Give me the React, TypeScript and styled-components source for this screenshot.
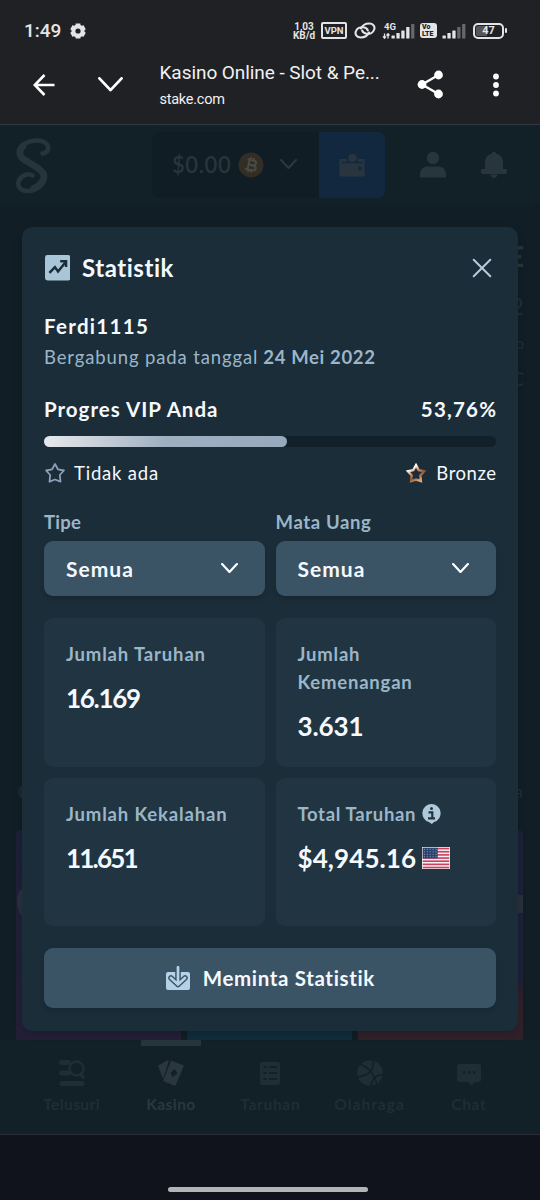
import React from "react";
import styled, { createGlobalStyle } from "styled-components";

const GlobalStyle = createGlobalStyle`
  *, *::before, *::after { box-sizing: border-box; }
  body { margin: 0; background: #10141b; }
  svg { display: block; flex: none; }
`;

const Screen = styled.div`
  width: 540px;
  height: 1200px;
  display: flex;
  flex-direction: column;
  overflow: hidden;
  background: #10131b;
  color: #fff;
  font-family: Lato, "Open Sans", sans-serif;
`;

/* ---------- text ---------- */

const Label = styled.span<{ $size?: number; $weight?: number; $track?: number; $color?: string; $line?: number }>`
  font-size: ${(p) => p.$size ?? 18.5}px;
  font-weight: ${(p) => p.$weight ?? 400};
  letter-spacing: ${(p) => p.$track ?? 0}px;
  margin-right: ${(p) => -(p.$track ?? 0)}px;
  color: ${(p) => p.$color ?? "#f5f9fd"};
  line-height: ${(p) => p.$line ?? 28}px;
  white-space: nowrap;
`;

/* ---------- phone chrome ---------- */

const StatusBar = styled.div`
  height: 61px;
  flex: none;
  display: flex;
  align-items: center;
  padding: 0 33px 0 24px;
  background: #202125;
  color: #e4e4e6;
  font-family: Roboto, sans-serif;
`;

const Clock = styled.span`
  font-size: 19px;
  font-weight: 500;
  width: 46px;
  line-height: 24px;
  padding-top: 1px;
`;

const StatusIcons = styled.div`
  margin-left: auto;
  display: flex;
  align-items: center;
`;

const Speed = styled.div`
  font-size: 10px;
  line-height: 9.5px;
  font-weight: 700;
  text-align: center;
  width: 22px;
  margin-right: 6px;
  padding-top: 1px;
  white-space: nowrap;
`;

const VpnTag = styled.div`
  width: 26px;
  height: 17px;
  border: 2px solid #e4e4e6;
  border-radius: 2px;
  font-size: 9.5px;
  font-weight: 700;
  line-height: 13px;
  text-align: center;
  margin-right: 7px;
`;

const VolteTag = styled.div`
  width: 17px;
  height: 15px;
  border-radius: 3px;
  background: #e4e4e6;
  color: #202125;
  font-size: 7px;
  font-weight: 900;
  line-height: 6.5px;
  padding: 1px 0 0 2px;
  margin: 0 5px;
`;

const Battery = styled.div`
  width: 31px;
  height: 16px;
  margin-left: 7px;
  border: 2px solid #e4e4e6;
  border-radius: 5px;
  padding: 1px;
  background: linear-gradient(90deg, #55565a 45%, transparent 45%) content-box;
  font-size: 11px;
  font-weight: 700;
  line-height: 10px;
  text-align: center;
`;

const BatteryTip = styled.div`
  width: 2px;
  height: 5px;
  margin-left: 1px;
  border-radius: 1px;
  background: #e4e4e6;
`;

const BrowserBar = styled.div`
  height: 64px;
  flex: none;
  display: grid;
  grid-template-columns: 66px 66px 1fr 66px 66px;
  padding: 0 11px 16px;
  align-items: center;
  justify-items: center;
  background: #202125;
  border-bottom: 1px solid #323841;
`;

const PageTitle = styled.div`
  justify-self: start;
  padding-left: 16.5px;
  padding-top: 1px;
  width: 100%;
  height: 47px;
  min-width: 0;
  display: flex;
  flex-direction: column;
  gap: 7px;
  font-family: Roboto, sans-serif;
  color: #f1f1f2;
`;

const TitleLine = styled.div`
  font-size: 19px;
  line-height: 22px;
  letter-spacing: -0.06px;
  white-space: nowrap;
`;

const HostLine = styled.div`
  font-size: 14.5px;
  line-height: 18px;
  letter-spacing: -0.25px;
`;

const SystemNav = styled.div`
  flex: 1;
  border-top: 1px solid #2a2d33;
  background: #10131b;
  display: flex;
  align-items: flex-end;
  justify-content: center;
  padding: 0 4px 8px 0;
`;

const HomeHandle = styled.div`
  width: 200px;
  height: 5.5px;
  border-radius: 3px;
  background: #b2b4b6;
`;

/* ---------- dimmed page ---------- */

const Page = styled.div`
  position: relative;
  height: 1009px;
  flex: none;
  display: flex;
  flex-direction: column;
  background: #111e25;
`;

const SiteHeader = styled.div`
  height: 79px;
  flex: none;
  display: flex;
  align-items: center;
  background: #122027;
  color: #28353d;
  padding: 0 32px 0 14px;
`;

const WalletGroup = styled.div`
  display: flex;
  margin-left: 100px;
  margin-right: 35px;
  height: 66px;
  border-radius: 7px;
  overflow: hidden;
`;

const Balance = styled.div`
  width: 167px;
  background: #101d24;
  display: flex;
  align-items: center;
  gap: 7px;
  padding-left: 20px;
`;

const BalanceChevron = styled.div`
  margin-left: 9px;
`;

const WalletButton = styled.div`
  width: 66px;
  background: #12283e;
  display: flex;
  align-items: center;
  justify-content: center;
`;

const HeaderIcons = styled.div`
  display: flex;
  gap: 35px;
`;

const Content = styled.div`
  flex: 1;
  display: flex;
  flex-direction: column;
  padding: 0 17px 0 16px;
`;

const Summary = styled.div`
  height: 578px;
  display: flex;
  flex-direction: column;
  align-items: flex-end;
  padding-top: 36px;
`;

const SummaryLine = styled.div<{ $size: number; $height: number; $bold?: boolean }>`
  font-size: ${(p) => p.$size}px;
  height: ${(p) => p.$height}px;
  line-height: 32px;
  margin-right: -1px;
  font-weight: ${(p) => (p.$bold ? 900 : 400)};
  color: ${(p) => (p.$bold ? "#28343c" : "#222e36")};
`;

const SectionHead = styled.div`
  height: 48px;
  display: flex;
  justify-content: space-between;
`;

const Dot = styled.div`
  width: 18px;
  height: 18px;
  margin: 1px 0 0 2px;
  border-radius: 50%;
  background: #1c2930;
`;

const SectionTail = styled(Label)`
  margin-top: -5px;
`;

const Tiles = styled.div`
  display: grid;
  grid-template-columns: repeat(3, 1fr);
  gap: 6px;
  height: 210px;
`;

const Tile = styled.div<{ $bg: string }>`
  background: ${(p) => p.$bg};
  border-radius: 5px 5px 0 0;
  display: flex;
  align-items: flex-start;
  overflow: hidden;
`;

const TileArt = styled.div<{ $right?: boolean }>`
  width: 14px;
  height: ${(p) => (p.$right ? 18 : 28)}px;
  margin: ${(p) => (p.$right ? "65px 0 0 auto" : "58px 0 0 1px")};
  border-radius: ${(p) => (p.$right ? 0 : "50%")};
  background: #28313a;
`;

const BottomNav = styled.div`
  height: 94px;
  flex: none;
  display: grid;
  grid-template-columns: repeat(5, 99.3px);
  padding-left: 22px;
  background: #122027;
`;

const NavItem = styled.div<{ $active?: boolean }>`
  display: flex;
  flex-direction: column;
  align-items: center;
  color: ${(p) => (p.$active ? "#2b373f" : "#1f2d35")};
`;

const NavMarker = styled.div<{ $active?: boolean }>`
  width: 60px;
  height: 6px;
  margin-bottom: 14px;
  background: ${(p) => (p.$active ? "#27343b" : "transparent")};
`;

const NavLabel = styled.div<{ $track: number }>`
  margin-top: 6px;
  font-size: 15.5px;
  line-height: 24px;
  font-weight: 700;
  letter-spacing: ${(p) => p.$track}px;
`;

/* ---------- dialog ---------- */

const Dialog = styled.div`
  position: absolute;
  left: 22px;
  top: 102px;
  width: 496px;
  height: 804px;
  border-radius: 10px;
  background: #1b2d38;
  padding: 22px;
  display: flex;
  flex-direction: column;
  box-shadow: 0 3px 8px rgba(0, 0, 0, 0.16);
`;

const Row = styled.div<{ $height: number; $gap?: number; $spread?: boolean; $top?: number }>`
  height: ${(p) => p.$height}px;
  margin-top: ${(p) => p.$top ?? 0}px;
  flex: none;
  display: flex;
  align-items: center;
  gap: ${(p) => p.$gap ?? 0}px;
  justify-content: ${(p) => (p.$spread ? "space-between" : "flex-start")};
`;

const DialogHeader = styled.div`
  height: 40px;
  flex: none;
  display: flex;
  align-items: center;
  justify-content: space-between;
  padding: 0 4px 2px 0.5px;
`;

const Track = styled.div`
  height: 11px;
  flex: none;
  margin-top: 12px;
  border-radius: 6px;
  background: #12202a;
`;

const Fill = styled.div`
  height: 100%;
  border-radius: 6px;
  background: linear-gradient(90deg, #e6e8ec 0%, #d3d8df 15%, #9eafc0 50%, #96aabd 100%);
`;

const Columns = styled.div`
  display: grid;
  grid-template-columns: 220.5px 220.5px;
  gap: 11px;
`;

const Filters = styled(Columns)`
  margin-top: 9px;
`;

const Field = styled.div`
  display: flex;
  flex-direction: column;
  gap: 5px;
`;

const Select = styled.div`
  height: 55px;
  border-radius: 9px;
  background: #3a5466;
  box-shadow: 0 3px 5px rgba(0, 0, 0, 0.14);
  display: flex;
  align-items: center;
  justify-content: space-between;
  padding: 0 27px 0 22px;
`;

const Cards = styled(Columns)`
  margin-top: 22px;
`;

const Card = styled.div`
  height: 148.5px;
  border-radius: 9px;
  background: #203541;
  padding: 22px;
  display: flex;
  flex-direction: column;
`;

const Figure = styled.div`
  display: flex;
  align-items: center;
  gap: 6px;
  margin-top: 16px;
`;

const RequestButton = styled.div`
  margin-top: 22px;
  height: 60px;
  flex: none;
  border-radius: 9px;
  background: #3a5466;
  box-shadow: 0 3px 5px rgba(0, 0, 0, 0.12);
  display: flex;
  align-items: center;
  justify-content: center;
  gap: 13px;
`;

/* ---------- drawings ---------- */

const Chevron = ({ w, h, stroke, color = "#fff" }: { w: number; h: number; stroke: number; color?: string }) => (
  <svg width={w} height={h} viewBox={`0 0 ${w} ${h}`} fill="none" stroke={color} strokeWidth={stroke} strokeLinecap="round" strokeLinejoin="round">
    <path d={`M${stroke / 2} ${stroke / 2}L${w / 2} ${h - stroke / 2 - 0.5}L${w - stroke / 2} ${stroke / 2}`} />
  </svg>
);

const Gear = () => (
  <svg width="16" height="16" viewBox="0 0 16 16">
    <circle cx="8" cy="8" r="4.6" fill="none" stroke="#e4e4e6" strokeWidth="4" />
    <g stroke="#e4e4e6" strokeWidth="4.8">
      {[0, 60, 120].map((a) => (
        <path key={a} transform={`rotate(${a} 8 8)`} d="M8 .4v2.2M8 13.4v2.2" />
      ))}
    </g>
  </svg>
);

const LinkRings = () => (
  <svg width="22" height="17" viewBox="0 0 22 17" fill="none" stroke="#e4e4e6" strokeWidth="2.100" strokeLinecap="round">
    <path d="M15 10.500C13.500 13.800 10 15.500 6.800 15.500 2.800 15.500.8 12.500 1.800 9.500 2.800 6.300 6.200 4.800 9.500 5.300c2 .3 3.700 1.500 4.300 3" />
    <path d="M7 6.500C8.500 3.200 12 1.500 15.200 1.500c4 0 6 3 5 6-1 3.200-4.400 4.700-7.700 4.200-2-.3-3.700-1.500-4.300-3" />
  </svg>
);

const Signal = ({ lit, first }: { lit: number; first?: boolean }) => (
  <svg width={first ? 39 : 24} height="18" viewBox={first ? "-6 0 39 18" : "9 0 24 18"}>
    {first && (
      <>
        <text x="2" y="7.700" fontSize="9.500" fontWeight="700" fill="#e4e4e6">4G</text>
        <path d="M2.500 11.500v4.500M1 14.300l1.500 1.900 1.500-1.900M6 16.500V12M4.500 13.500L6 11.700l1.500 1.800" stroke="#e4e4e6" strokeWidth="1.300" fill="none" />
      </>
    )}
    {[3, 5.5, 8, 11.5, 14.5].map((h, i) => (
      <rect key={i} x={9.5 + i * 4.9} y={16.5 - h} width="3.300" height={h} rx=".5" fill={i < lit ? "#e4e4e6" : "#66676b"} />
    ))}
  </svg>
);

const BackArrow = () => (
  <svg width="22" height="22" viewBox="0 0 22 22" fill="none" stroke="#fff" strokeWidth="2.600">
    <path d="M21.500 11H2M11.500 1L1.800 11l9.700 10" />
  </svg>
);

const Share = () => (
  <svg width="27" height="29" viewBox="0 0 27 29" fill="#fff">
    <path d="M21.500 5L5 14.500 21.500 24" fill="none" stroke="#fff" strokeWidth="2.400" />
    <circle cx="21.500" cy="5" r="4.400" />
    <circle cx="5" cy="14.500" r="4.400" />
    <circle cx="21.500" cy="24" r="4.400" />
  </svg>
);

const Dots = () => (
  <svg width="6" height="24" viewBox="0 0 6 24" fill="#fff">
    <circle cx="3" cy="3.500" r="2.900" />
    <circle cx="3" cy="12" r="2.900" />
    <circle cx="3" cy="20.500" r="2.900" />
  </svg>
);

const Logo = () => (
  <svg width="38" height="58" viewBox="0 0 38 58" fill="none" stroke="#26343c" strokeLinecap="round">
    <path
      d="M28.500 17.500C34 17 35.500 12 33 8.500 29 3 17 3.500 10.500 8 4 12.500 4 19.500 9.500 23.500 16 28 27 31 30.500 37.500 33 44.500 24 55 13.500 55 5 55 2.500 48.500 5.500 43.500 8.500 38.500 15 37 18.500 39.500"
      strokeWidth="4.600"
    />
    <path d="M9 10C4.500 14 5 20 10 23.700 16.500 28 26.500 31.500 29.700 38.500 31 44 26 50 20 52.500" strokeWidth="6.800" />
  </svg>
);

const Bitcoin = () => (
  <svg width="26" height="26" viewBox="0 0 26 26">
    <circle cx="13" cy="13" r="12.500" fill="#322e25" />
    <g transform="rotate(12 13 13)" fill="none" stroke="#4a4a45" strokeWidth="2">
      <path d="M8.500 8h6c4 0 4 5 0 5h-4.500M10 13h5c4.500 0 4.500 5 0 5H8M10.500 8v10M11.500 5.500V8M14.500 5.500V8M11.500 18v2.500M14.500 18v2.500" />
    </g>
  </svg>
);

const Wallet = () => (
  <svg width="27" height="24" viewBox="0 0 27 24">
    <path d="M1 6h7v3h11V6h6.500v17.500H2.500Q.5 23.500.5 21.500V6.500z" fill="#28353f" />
    <circle cx="13.500" cy="5" r="4.300" fill="#28353f" />
    <path d="M3 9.500h21" stroke="#12283e" strokeWidth="1.500" />
    <circle cx="21" cy="15.500" r="2" fill="#12283e" />
  </svg>
);

const User = () => (
  <svg width="26" height="27" viewBox="0 0 26 27" fill="#28353d">
    <circle cx="13" cy="7" r="6.200" />
    <path d="M0 26.500v-3C0 18 4 15.500 8 15.500h10c4 0 8 2.500 8 8v3z" />
  </svg>
);

const Bell = () => (
  <svg width="26" height="27" viewBox="0 0 26 27" fill="#28353d">
    <path d="M11 2.500a2 2 0 0 1 4 0c4.500 1 7 4.500 7 8.500v7h2a2 2 0 0 1 0 5H2a2 2 0 0 1 0-5h2v-7c0-4 2.500-7.500 7-8.500z" />
    <path d="M9.500 23.500h7c-.5 4.500-6.500 4.500-7 0z" />
  </svg>
);

const StatsIcon = () => (
  <svg width="25.500" height="25.500" viewBox="0 0 26 26">
    <rect width="26" height="26" rx="2.500" fill="#a9c5d8" />
    <path d="M4.500 18.300l5.600-6 3.200 4.500 7.400-9.200" fill="none" stroke="#1b2d38" strokeWidth="2.500" />
    <path d="M15.500 6.300h6v6" fill="none" stroke="#1b2d38" strokeWidth="2.500" />
  </svg>
);

const Close = () => (
  <svg width="20" height="20" viewBox="0 0 20 20" stroke="#b4cbdc" strokeWidth="2" strokeLinecap="round">
    <path d="M1.700 1.700l16.600 16.600M18.300 1.700L1.700 18.300" />
  </svg>
);

const Star = ({ bronze }: { bronze?: boolean }) => (
  <svg width="22" height="22" viewBox="0 0 22 22" fill="none">
    <defs>
      <linearGradient id="bronze" x1="0" y1="0" x2=".65" y2="1">
        <stop offset=".25" stopColor="#fffaf4" />
        <stop offset=".48" stopColor="#d4935f" />
        <stop offset=".72" stopColor="#8d5938" />
        <stop offset="1" stopColor="#e0a477" />
      </linearGradient>
    </defs>
    <path
      d={
        bronze
          ? "M11 3.200l2.700 4.900 5.300 1.200-3.700 4.100.6 5.600-4.900-1.500-4.900 1.500.6-5.600L3 9.300l5.300-1.200z"
          : "M11 2l2.900 5.300 6 1.200-4.100 4.500.7 6.700-5.500-2.200-5.500 2.200.7-6.700L2.100 8.500l6-1.200z"
      }
      stroke={bronze ? "url(#bronze)" : "#8b9fb6"}
      strokeWidth={bronze ? 2.4 : 1.8}
      strokeLinejoin={bronze ? "miter" : "round"}
    />
  </svg>
);

const Info = () => (
  <svg width="19" height="20" viewBox="0 0 19 20">
    <path d="M9.500 0a9.200 9.200 0 0 1 2.600 18L9.800 20l-2.900-2A9.200 9.200 0 0 1 9.500 0z" fill="#b0c9da" />
    <path d="M6.500 8.300h3.800v6M6 14.300h7" fill="none" stroke="#203541" strokeWidth="2.200" />
    <circle cx="9.500" cy="4.600" r="1.500" fill="#203541" />
  </svg>
);

const Flag = () => (
  <svg width="28" height="22" viewBox="0 0 28 22">
    <rect width="28" height="22" fill="#f3eef1" />
    {[0, 1, 2, 3, 4, 5, 6].map((i) => (
      <rect key={i} x=".7" y={0.8 + i * 3.15} width="26.600" height="1.600" fill="#c9405c" />
    ))}
    <rect x=".7" y=".8" width="15" height="10.600" fill="#29436f" />
    {[0, 1, 2, 3].map((r) =>
      [0, 1, 2, 3, 4].map((c) => <circle key={`${r}${c}`} cx={2.4 + c * 2.9} cy={2.3 + r * 2.5} r=".55" fill="#9fb4d0" />)
    )}
  </svg>
);

const Download = () => (
  <svg width="24" height="24" viewBox="0 0 24 24">
    <rect x="0" y="6" width="24" height="18" rx="2" fill="#b5d1e7" />
    <path d="M12 5v12M5 12l7 6.500 7-6.500" fill="none" stroke="#3a5466" strokeWidth="5.600" strokeLinecap="round" strokeLinejoin="round" />
    <path d="M12 1.200v16.500M5 12l7 6.500 7-6.500" fill="none" stroke="#b5d1e7" strokeWidth="2.700" strokeLinecap="round" strokeLinejoin="round" />
  </svg>
);

const navIcons: Record<string, React.ReactNode> = {
  Telusuri: (
    <>
      <path d="M2.500 2.500h7M2.500 13h7" stroke="currentColor" strokeWidth="5" strokeLinecap="round" />
      <path d="M3 23.500h20" stroke="currentColor" strokeWidth="5" strokeLinecap="round" />
      <circle cx="17.500" cy="8.500" r="7" fill="#122027" stroke="currentColor" strokeWidth="2.600" />
      <path d="M21 13l4 5.500" stroke="currentColor" strokeWidth="3" />
    </>
  ),
  Kasino: (
    <>
      <path d="M1 6L10 1 5 17z" fill="currentColor" strokeLinejoin="round" stroke="currentColor" strokeWidth="1.500" />
      <path d="M13.500 1.500L25 6l-8 19L6 20.500z" fill="currentColor" strokeLinejoin="round" stroke="currentColor" strokeWidth="1.500" />
      <path d="M17 9l2.500 4.500-5 3.500-2-4.500z" fill="#122027" />
    </>
  ),
  Taruhan: (
    <>
      <rect x="3" y="2" width="20" height="23" rx="2" fill="currentColor" />
      <path d="M6.500 7h3M6.500 13h3M6.500 19h3M12 7h8M12 13h8M12 19h8" stroke="#122027" strokeWidth="2" />
    </>
  ),
  Olahraga: (
    <>
      <circle cx="13" cy="13" r="12.800" fill="currentColor" />
      <path d="M3 4c6 2 15 8 17 22M16 0c2 8-3 16-16 17M26 15c-6-1-11 3-12 11" fill="none" stroke="#122027" strokeWidth="1.700" />
    </>
  ),
  Chat: (
    <>
      <path d="M3 4h20q2 0 2 2v14q0 2-2 2h-4l-3.500 3.500L12 22H3q-2 0-2-2V6q0-2 2-2z" fill="currentColor" />
      <path d="M7 12.500h2.500M12 12.500h2.500M17 12.500h2.500" stroke="#122027" strokeWidth="2.500" />
    </>
  ),
};

const navItems = [
  { label: "Telusuri", track: 0.4 },
  { label: "Kasino", track: 0.4, active: true },
  { label: "Taruhan", track: 0.7 },
  { label: "Olahraga", track: 1 },
  { label: "Chat", track: 0.7 },
];

const MUTED = "#9bb6c8";

export default function App() {
  return (
    <>
      <GlobalStyle />
      <Screen>
        <StatusBar>
          <Clock>1:49</Clock>
          <Gear />
          <StatusIcons>
            <Speed>1,03<br />KB/d</Speed>
            <VpnTag>VPN</VpnTag>
            <LinkRings />
            <Signal lit={4} first />
            <VolteTag>Vo<br />LTE</VolteTag>
            <Signal lit={3} />
            <Battery>47</Battery>
            <BatteryTip />
          </StatusIcons>
        </StatusBar>
        <BrowserBar>
          <BackArrow />
          <Chevron w={25} h={15} stroke={2.8} />
          <PageTitle>
            <TitleLine>Kasino Online - Slot &amp; Pe...</TitleLine>
            <HostLine>stake.com</HostLine>
          </PageTitle>
          <Share />
          <Dots />
        </BrowserBar>

        <Page>
          <SiteHeader>
            <Logo />
            <WalletGroup>
              <Balance>
                <Label $size={22} $weight={600} $color="#28353d" $track={0.6}>$0.00</Label>
                <Bitcoin />
                <BalanceChevron>
                  <Chevron w={17} h={10.5} stroke={2} color="#2b3840" />
                </BalanceChevron>
              </Balance>
              <WalletButton><Wallet /></WalletButton>
            </WalletGroup>
            <HeaderIcons>
              <User />
              <Bell />
            </HeaderIcons>
          </SiteHeader>
          <Content>
            <Summary>
              <SummaryLine $size={28} $height={50} $bold>E</SummaryLine>
              <SummaryLine $size={24} $height={37}>2</SummaryLine>
              <SummaryLine $size={16} $height={35}>o</SummaryLine>
              <SummaryLine $size={20} $height={36}>C</SummaryLine>
            </Summary>
            <SectionHead>
              <Dot />
              <SectionTail $size={18} $color="#222e36">a</SectionTail>
            </SectionHead>
            <Tiles>
              <Tile $bg="linear-gradient(#1c2039, #241f37)"><TileArt /></Tile>
              <Tile $bg="#102c3a" />
              <Tile $bg="linear-gradient(#1c2039 70%, #30202a 80%)"><TileArt $right /></Tile>
            </Tiles>
          </Content>
          <BottomNav>
            {navItems.map((n) => (
              <NavItem key={n.label} $active={n.active}>
                <NavMarker $active={n.active} />
                <svg width="26" height="26" viewBox="0 0 26 26" fill="none">{navIcons[n.label]}</svg>
                <NavLabel $track={n.track}>{n.label}</NavLabel>
              </NavItem>
            ))}
          </BottomNav>

          <Dialog>
            <DialogHeader>
              <Row $height={38} $gap={12}>
                <StatsIcon />
                <Label $size={24} $weight={700} $track={0.55}>Statistik</Label>
              </Row>
              <Close />
            </DialogHeader>
            <Row $height={35} $top={19}><Label $size={20.5} $weight={700} $track={1.3}>Ferdi1115</Label></Row>
            <Row $height={28} $gap={6}>
              <Label $size={18.5} $track={0.87} $color={MUTED}>Bergabung pada tanggal</Label>
              <Label $size={18.5} $weight={700} $track={0.65} $color={MUTED}>24 Mei 2022</Label>
            </Row>
            <Row $height={31} $top={22} $spread>
              <Label $size={20.5} $weight={700} $track={1}>Progres VIP Anda</Label>
              <Label $size={20.5} $weight={700} $track={1.2}>53,76%</Label>
            </Row>
            <Track><Fill style={{ width: "53.76%" }} /></Track>
            <Row $height={52} $spread>
              <Row $height={28} $gap={8}>
                <Star />
                <Label $track={0.8}>Tidak ada</Label>
              </Row>
              <Row $height={28} $gap={9}>
                <Star bronze />
                <Label $track={0.55}>Bronze</Label>
              </Row>
            </Row>
            <Filters>
              <Field>
                <Label $weight={700} $track={0.3}  $color={MUTED}>Tipe</Label>
                <Select>
                  <Label $size={21} $weight={700} $track={1}>Semua</Label>
                  <Chevron w={17} h={10.5} stroke={2.2} />
                </Select>
              </Field>
              <Field>
                <Label $weight={700} $track={0.65} $color={MUTED}>Mata Uang</Label>
                <Select>
                  <Label $size={21} $weight={700} $track={1}>Semua</Label>
                  <Chevron w={17} h={10.5} stroke={2.2} />
                </Select>
              </Field>
            </Filters>
            <Cards>
              <Card>
                <Label $weight={700} $track={0.85} $color={MUTED}>Jumlah Taruhan</Label>
                <Figure><Label $size={26} $weight={700} $track={-1.3}>16.169</Label></Figure>
              </Card>
              <Card>
                <Label $weight={700} $track={0.8} $color={MUTED}>Jumlah<br />Kemenangan</Label>
                <Figure><Label $size={26} $weight={700} $track={-0.1}>3.631</Label></Figure>
              </Card>
              <Card>
                <Label $weight={700} $track={0.85} $color={MUTED}>Jumlah Kekalahan</Label>
                <Figure><Label $size={26} $weight={700} $track={-1.8}>11.651</Label></Figure>
              </Card>
              <Card>
                <Row $height={28} $gap={7}>
                  <Label $weight={700} $track={0.65} $color={MUTED}>Total Taruhan</Label>
                  <Info />
                </Row>
                <Figure>
                  <Label $size={26} $weight={700} $track={0.1}>$4,945.16</Label>
                  <Flag />
                </Figure>
              </Card>
            </Cards>
            <RequestButton>
              <Download />
              <Label $size={20.5} $weight={700} $track={0.65}>Meminta Statistik</Label>
            </RequestButton>
          </Dialog>
        </Page>
        <SystemNav><HomeHandle /></SystemNav>
      </Screen>
    </>
  );
}
